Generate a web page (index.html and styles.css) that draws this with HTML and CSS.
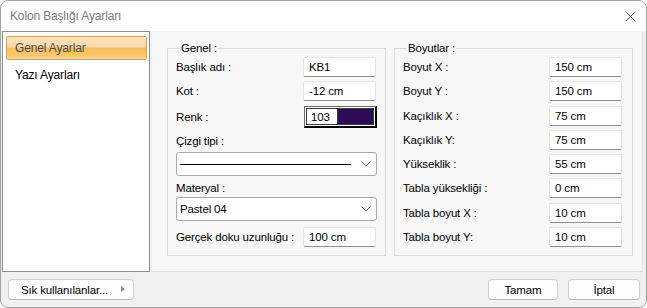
FILE: index.html
```html
<!DOCTYPE html>
<html lang="tr">
<head>
    <meta charset="UTF-8">
    <title>Kolon Başlığı Ayarları</title>
    <link rel="stylesheet" href="styles.css">
</head>
<body>
    <div class="window">
        <div class="titlebar">
            <span class="title">Kolon Başlığı Ayarları</span>
            <svg class="close" width="11" height="11" viewBox="0 0 11 11">
                <path d="M0.5 0.5 L10.5 10.5 M10.5 0.5 L0.5 10.5" stroke="#5a5a5a" stroke-width="1" fill="none"/>
            </svg>
        </div>

        <div class="main">
            <ul class="sidebar">
                <li class="item active">Genel Ayarlar</li>
                <li class="item">Yazı Ayarları</li>
            </ul>

            <div class="panel">
                <fieldset class="group genel">
                    <legend>Genel :</legend>
                    <div class="row">
                        <span class="label">Başlık adı :</span>
                        <span class="field">KB1</span>
                    </div>
                    <div class="row r-kot">
                        <span class="label">Kot :</span>
                        <span class="field">-12 cm</span>
                    </div>
                    <div class="row r-renk">
                        <span class="label">Renk :</span>
                        <span class="swatch">
                            <span class="swatch-num">103</span>
                            <span class="swatch-color"></span>
                        </span>
                    </div>
                    <div class="caption c-cizgi">Çizgi tipi :</div>
                    <div class="select s-cizgi">
                        <span class="line"></span>
                        <svg class="chev" width="10" height="6" viewBox="0 0 10 6">
                            <path d="M0.5 0.5 L5 5 L9.5 0.5" stroke="#6a6a6a" fill="none"/>
                        </svg>
                    </div>
                    <div class="caption c-mat">Materyal :</div>
                    <div class="select s-mat">
                        <span class="select-text">Pastel 04</span>
                        <svg class="chev" width="10" height="6" viewBox="0 0 10 6">
                            <path d="M0.5 0.5 L5 5 L9.5 0.5" stroke="#6a6a6a" fill="none"/>
                        </svg>
                    </div>
                    <div class="row r-doku">
                        <span class="label">Gerçek doku uzunluğu :</span>
                        <span class="field">100 cm</span>
                    </div>
                </fieldset>

                <fieldset class="group boyut">
                    <legend>Boyutlar :</legend>
                    <div class="row"><span class="label">Boyut X :</span><span class="field">150 cm</span></div>
                    <div class="row"><span class="label">Boyut Y :</span><span class="field">150 cm</span></div>
                    <div class="row"><span class="label">Kaçıklık X :</span><span class="field">75 cm</span></div>
                    <div class="row"><span class="label">Kaçıklık Y:</span><span class="field">75 cm</span></div>
                    <div class="row"><span class="label">Yükseklik :</span><span class="field">55 cm</span></div>
                    <div class="row"><span class="label">Tabla yüksekliği :</span><span class="field">0 cm</span></div>
                    <div class="row"><span class="label">Tabla boyut X :</span><span class="field">10 cm</span></div>
                    <div class="row"><span class="label">Tabla boyut Y:</span><span class="field">10 cm</span></div>
                </fieldset>
            </div>
        </div>

        <div class="footer">
            <button class="btn btn-fav">Sık kullanılanlar...<span class="arrow"></span></button>
            <button class="btn btn-ok">Tamam</button>
            <button class="btn btn-cancel">İptal</button>
        </div>
    </div>
</body>
</html>
```

FILE: styles.css
```css
body {
    margin: 0;
    padding: 0;
    font-family: 'Liberation Sans', Arial, sans-serif;
    font-size: 11.5px;
    letter-spacing: -0.15px;
    color: #000;
    background: #fff;
}

.window {
    box-sizing: border-box;
    width: 647px;
    height: 308px;
    border: 1px solid #a3a3a3;
    border-radius: 8px;
    overflow: hidden;
    background: #f0f0f0;
    display: flex;
    flex-direction: column;
}

/* title bar */
.titlebar {
    height: 30px;
    background: #fff;
    display: flex;
    align-items: center;
    padding: 0 10px 0 9px;
}

.titlebar .title {
    flex: 1;
    color: #7b7b7b;
    font-size: 12px;
}

/* body */
.main {
    height: 241px;
    display: flex;
    padding-left: 1px;
}

.sidebar {
    box-sizing: border-box;
    width: 148px;
    margin: 0;
    padding: 4px 2px 0 3px;
    list-style: none;
    background: #fff;
    border: 1px solid #8e8e8e;
}

.sidebar .item {
    box-sizing: border-box;
    height: 24px;
    line-height: 22px;
    padding-left: 8px;
    margin-bottom: 3px;
    border: 1px solid transparent;
    font-size: 12px;
}

.sidebar .item.active {
    color: #4b4b4b;
    border-color: #d1a45e;
    border-radius: 2px;
    background: linear-gradient(#fde4c0 0%, #fcd7a4 45%, #f9bf5e 52%, #f9c56d 80%, #fbd592 100%);
}

.panel {
    box-sizing: border-box;
    width: 491px;
    margin-left: 2px;
    background: #f7f7f7;
    border-right: 1px solid #e2e2e2;
    border-bottom: 1px solid #e2e2e2;
    padding: 10px 0 0 15px;
    display: flex;
    gap: 8px;
    align-items: flex-start;
}

.group {
    box-sizing: border-box;
    margin: 0;
    height: 215px;
    border: 1px solid #dadada;
    padding: 2px 10px 0 8px;
    display: flex;
    flex-direction: column;
    min-width: 0;
}

.group legend {
    padding: 0 1px;
    margin-left: 4px;
    line-height: 14px;
}

.genel {
    width: 219px;
    padding-right: 9px;
}

.boyut {
    width: 239px;
    gap: 4.3px;
}

.row {
    display: flex;
    align-items: center;
    justify-content: space-between;
    height: 20px;
    flex-shrink: 0;
}

.field {
    box-sizing: border-box;
    width: 73px;
    height: 20px;
    line-height: 19px;
    padding-left: 5px;
    background: #fff;
    border: 1px solid #e4e4e4;
    border-bottom-color: #8f8f8f;
    border-radius: 2px;
}

.genel .r-kot {
    margin-top: 4px;
}

.genel .r-renk {
    height: 22px;
    margin-top: 5px;
}

.swatch {
    box-sizing: border-box;
    width: 73px;
    height: 22px;
    margin-right: -1px;
    display: flex;
    padding: 1px;
    background: #fff;
    border: 1px solid #6a6a6a;
    border-right: 2px solid #000;
    border-bottom: 2px solid #000;
}

.swatch-num {
    box-sizing: border-box;
    width: 31px;
    line-height: 16px;
    padding-left: 4px;
    border: 1px solid #3a3a3a;
    border-right: none;
}

.swatch-color {
    flex: 1;
    background: #2e0c54;
    border: 1px solid #3a3a3a;
}

.caption {
    line-height: 14px;
    flex-shrink: 0;
}

.c-cizgi {
    margin-top: 6px;
}

.c-mat {
    margin-top: 5px;
}

.select {
    box-sizing: border-box;
    height: 24px;
    margin-right: -1px;
    flex-shrink: 0;
    display: flex;
    align-items: center;
    padding: 0 5px 0 3px;
    background: #fff;
    border: 1px solid #a9a9a9;
    border-radius: 3px;
}

.s-cizgi {
    margin-top: 4px;
}

.s-mat {
    margin-top: 2px;
}

.select .line {
    flex: 1;
    height: 1px;
    background: #000;
    margin-right: 10px;
}

.select .select-text {
    flex: 1;
}

.genel .r-doku {
    margin-top: 6px;
}

/* footer */
.footer {
    flex: 1;
    display: flex;
    align-items: flex-start;
    padding: 7px 6px 0 7px;
    gap: 10px;
}

.btn {
    box-sizing: border-box;
    height: 21px;
    padding: 0;
    font-family: 'Liberation Sans', Arial, sans-serif;
    font-size: 11.5px;
    letter-spacing: -0.15px;
    color: #000;
    background: #fdfdfd;
    border: 1px solid #d0d0d0;
    border-bottom-color: #b8b8b8;
    border-radius: 4px;
}

.btn-fav {
    width: 126px;
    margin-right: auto;
    text-align: left;
    padding-left: 12px;
    position: relative;
}

.btn-fav .arrow {
    position: absolute;
    right: 8px;
    top: 6px;
    width: 0;
    height: 0;
    border-top: 3.5px solid transparent;
    border-bottom: 3.5px solid transparent;
    border-left: 4px solid #8a8a8a;
}

.btn-ok {
    width: 70px;
}

.btn-cancel {
    width: 72px;
}
```
